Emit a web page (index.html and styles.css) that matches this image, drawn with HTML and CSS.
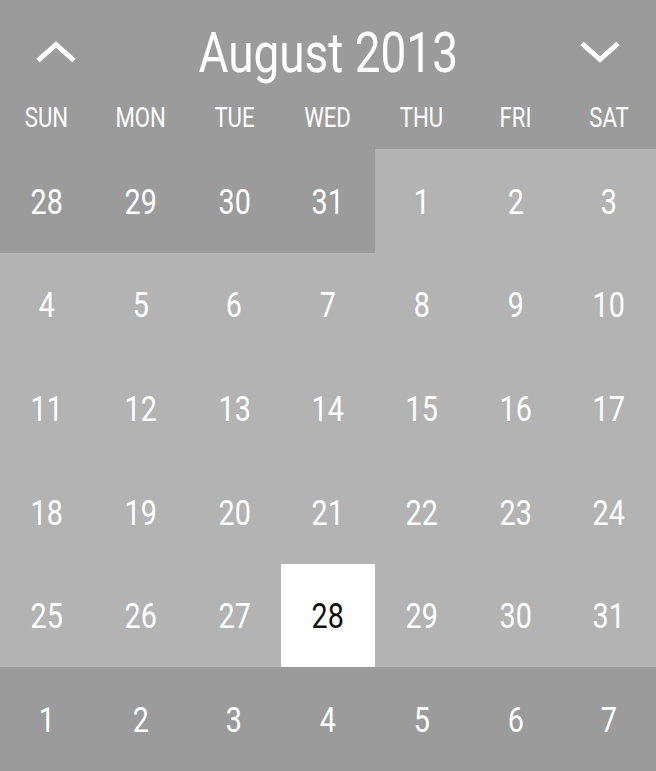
FILE: index.html
```html
<!DOCTYPE html>
<html>
<head>
<meta charset="utf-8">
<link rel="stylesheet" href="styles.css">
</head>
<body>
<div class="cal">
  <div class="head">
    <svg class="chev" viewBox="0 0 42 22" width="42" height="22"><polyline points="3,19.5 21,3.5 39,19.5"/></svg>
    <div class="title"><span class="sq">August 2013</span></div>
    <svg class="chev" viewBox="0 0 42 22" width="42" height="22"><polyline points="3,2.5 21,18.5 39,2.5"/></svg>
  </div>
  <div class="days">
    <div class="dn"><span class="sq">SUN</span></div>
    <div class="dn"><span class="sq">MON</span></div>
    <div class="dn"><span class="sq">TUE</span></div>
    <div class="dn"><span class="sq">WED</span></div>
    <div class="dn"><span class="sq">THU</span></div>
    <div class="dn"><span class="sq">FRI</span></div>
    <div class="dn"><span class="sq">SAT</span></div>
  </div>
  <div class="grid">
    <div class="c other"><span class="sq">28</span></div>
    <div class="c other"><span class="sq">29</span></div>
    <div class="c other"><span class="sq">30</span></div>
    <div class="c other"><span class="sq">31</span></div>
    <div class="c cur"><span class="sq">1</span></div>
    <div class="c cur"><span class="sq">2</span></div>
    <div class="c cur"><span class="sq">3</span></div>
    <div class="c cur"><span class="sq">4</span></div>
    <div class="c cur"><span class="sq">5</span></div>
    <div class="c cur"><span class="sq">6</span></div>
    <div class="c cur"><span class="sq">7</span></div>
    <div class="c cur"><span class="sq">8</span></div>
    <div class="c cur"><span class="sq">9</span></div>
    <div class="c cur"><span class="sq">10</span></div>
    <div class="c cur"><span class="sq">11</span></div>
    <div class="c cur"><span class="sq">12</span></div>
    <div class="c cur"><span class="sq">13</span></div>
    <div class="c cur"><span class="sq">14</span></div>
    <div class="c cur"><span class="sq">15</span></div>
    <div class="c cur"><span class="sq">16</span></div>
    <div class="c cur"><span class="sq">17</span></div>
    <div class="c cur"><span class="sq">18</span></div>
    <div class="c cur"><span class="sq">19</span></div>
    <div class="c cur"><span class="sq">20</span></div>
    <div class="c cur"><span class="sq">21</span></div>
    <div class="c cur"><span class="sq">22</span></div>
    <div class="c cur"><span class="sq">23</span></div>
    <div class="c cur"><span class="sq">24</span></div>
    <div class="c cur"><span class="sq">25</span></div>
    <div class="c cur"><span class="sq">26</span></div>
    <div class="c cur"><span class="sq">27</span></div>
    <div class="c sel"><span class="sq">28</span></div>
    <div class="c cur"><span class="sq">29</span></div>
    <div class="c cur"><span class="sq">30</span></div>
    <div class="c cur"><span class="sq">31</span></div>
    <div class="c other"><span class="sq">1</span></div>
    <div class="c other"><span class="sq">2</span></div>
    <div class="c other"><span class="sq">3</span></div>
    <div class="c other"><span class="sq">4</span></div>
    <div class="c other"><span class="sq">5</span></div>
    <div class="c other"><span class="sq">6</span></div>
    <div class="c other"><span class="sq">7</span></div>
  </div>
</div>
</body>
</html>
```
FILE: styles.css
```css
html, body {
  margin: 0;
  padding: 0;
  background: #9b9b9b;
}
body {
  width: 656px;
  height: 771px;
  overflow: hidden;
  font-family: Roboto, "Liberation Sans", sans-serif;
  color: #ffffff;
}
.cal {
  display: flex;
  flex-direction: column;
  width: 656px;
  height: 771px;
}
.sq {
  display: inline-block;
  transform: scaleX(0.82);
}
.head {
  display: flex;
  align-items: center;
  justify-content: space-between;
  padding: 18px 35px 0 35px;
  height: 68px;
}
.chev {
  display: block;
  fill: none;
  stroke: #ffffff;
  stroke-width: 5;
  stroke-linejoin: miter;
}
.title {
  font-size: 56px;
  line-height: 68px;
  font-weight: 400;
  padding-top: 2px;
}
.days {
  display: grid;
  grid-template-columns: repeat(7, 1fr);
  height: 63px;
}
.dn {
  display: flex;
  align-items: center;
  justify-content: center;
  font-size: 27px;
  line-height: 61px;
  padding-top: 2px;
}
.grid {
  flex: 1;
  display: grid;
  grid-template-columns: repeat(7, 1fr);
  grid-template-rows: repeat(6, 1fr);
}
.c {
  display: flex;
  align-items: center;
  justify-content: center;
  font-size: 35px;
  padding-top: 3px;
}
.other {
  background: #9b9b9b;
}
.cur {
  background: #b3b3b3;
}
.sel {
  background: #ffffff;
  color: #111111;
}
```
